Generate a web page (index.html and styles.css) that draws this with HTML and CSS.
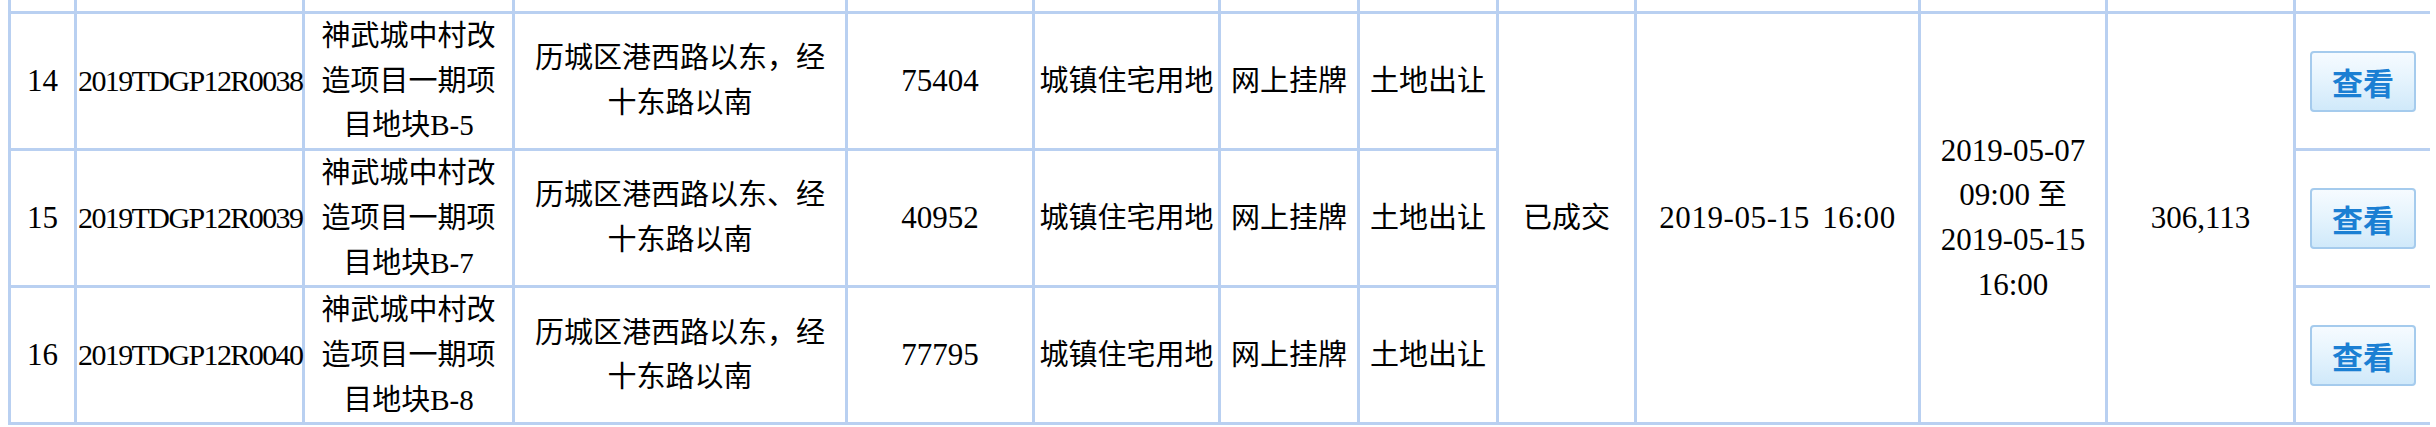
FILE: index.html
```html
<!DOCTYPE html>
<html lang="zh-CN">
<head>
<meta charset="utf-8">
<title>土地出让结果</title>
<link rel="stylesheet" href="styles.css">
</head>
<body>
<table class="list">
  <colgroup>
    <col class="c-no"><col class="c-code"><col class="c-name"><col class="c-loc"><col class="c-area">
    <col class="c-use"><col class="c-way"><col class="c-type"><col class="c-state"><col class="c-deal">
    <col class="c-range"><col class="c-price"><col class="c-op">
  </colgroup>
  <tbody>
    <tr class="cut">
      <td></td><td></td><td></td><td></td><td></td><td></td><td></td><td></td><td></td><td></td><td></td><td></td><td></td>
    </tr>
    <tr>
      <td class="num">14</td>
      <td class="code">2019TDGP12R0038</td>
      <td class="name">神武城中村改造项目一期项目地块B-5</td>
      <td class="loc">历城区港西路以东，经十东路以南</td>
      <td class="num">75404</td>
      <td>城镇住宅用地</td>
      <td>网上挂牌</td>
      <td>土地出让</td>
      <td rowspan="3">已成交</td>
      <td rowspan="3" class="num deal">2019-05-15 16:00</td>
      <td rowspan="3" class="num range"><span class="nw">2019-05-07</span> <span class="nw">09:00</span> <span class="zhi">至</span> <span class="nw">2019-05-15</span> <span class="nw">16:00</span></td>
      <td rowspan="3" class="num">306,113</td>
      <td><a class="btn" href="#">查看</a></td>
    </tr>
    <tr>
      <td class="num">15</td>
      <td class="code">2019TDGP12R0039</td>
      <td class="name">神武城中村改造项目一期项目地块B-7</td>
      <td class="loc">历城区港西路以东、经十东路以南</td>
      <td class="num">40952</td>
      <td>城镇住宅用地</td>
      <td>网上挂牌</td>
      <td>土地出让</td>
      <td><a class="btn" href="#">查看</a></td>
    </tr>
    <tr>
      <td class="num">16</td>
      <td class="code">2019TDGP12R0040</td>
      <td class="name">神武城中村改造项目一期项目地块B-8</td>
      <td class="loc">历城区港西路以东，经十东路以南</td>
      <td class="num">77795</td>
      <td>城镇住宅用地</td>
      <td>网上挂牌</td>
      <td>土地出让</td>
      <td><a class="btn" href="#">查看</a></td>
    </tr>
  </tbody>
</table>
</body>
</html>
```

FILE: styles.css
```css
html, body {
  background: #fff;
}
body {
  margin: 0 6px 0 8px;
}
.list {
  border-collapse: collapse;
  table-layout: fixed;
  width: 2422px;
  font-family: "Liberation Serif", "Noto Sans CJK SC", serif;
  font-size: 29px;
  line-height: 44.7px;
  color: #000;
  background: #fff;
}
.list td {
  border: 3px solid #b9d0f1;
  padding: 0 3px;
  text-align: center;
  vertical-align: middle;
}
.c-no { width: 66px; }
.c-code { width: 228px; }
.c-name { width: 210px; }
.c-loc { width: 333px; }
.c-area { width: 187px; }
.c-use { width: 186px; }
.c-way { width: 139px; }
.c-type { width: 139px; }
.c-state { width: 138px; }
.c-deal { width: 284px; }
.c-range { width: 187px; }
.c-price { width: 188px; }
.c-op { width: 137px; }

.list tr.cut td {
  border-top: 0;
  height: 11px;
  padding: 0;
  line-height: 0;
}
.list td.num {
  font-size: 31px;
}
.list td.deal {
  letter-spacing: 0.6px;
  word-spacing: 4px;
}
.list td.code {
  font-size: 30px;
  padding: 0 1px;
  letter-spacing: -1.6px;
}
.list td.name {
  padding: 0 6px;
}
.list td.loc {
  padding: 0 10px;
}
.nw {
  white-space: nowrap;
}
.zhi {
  font-size: 29px;
}
.btn {
  display: inline-block;
  width: 102px;
  height: 57px;
  border: 2px solid #a5cbed;
  border-radius: 4px;
  background: linear-gradient(to bottom, #f6fbff 0%, #e6f4fd 45%, #d0e9fa 100%);
  color: #1b7fd3;
  font-family: "Noto Sans CJK SC", sans-serif;
  font-size: 31px;
  font-weight: 700;
  line-height: 57px;
  text-decoration: none;
  vertical-align: middle;
}
```
